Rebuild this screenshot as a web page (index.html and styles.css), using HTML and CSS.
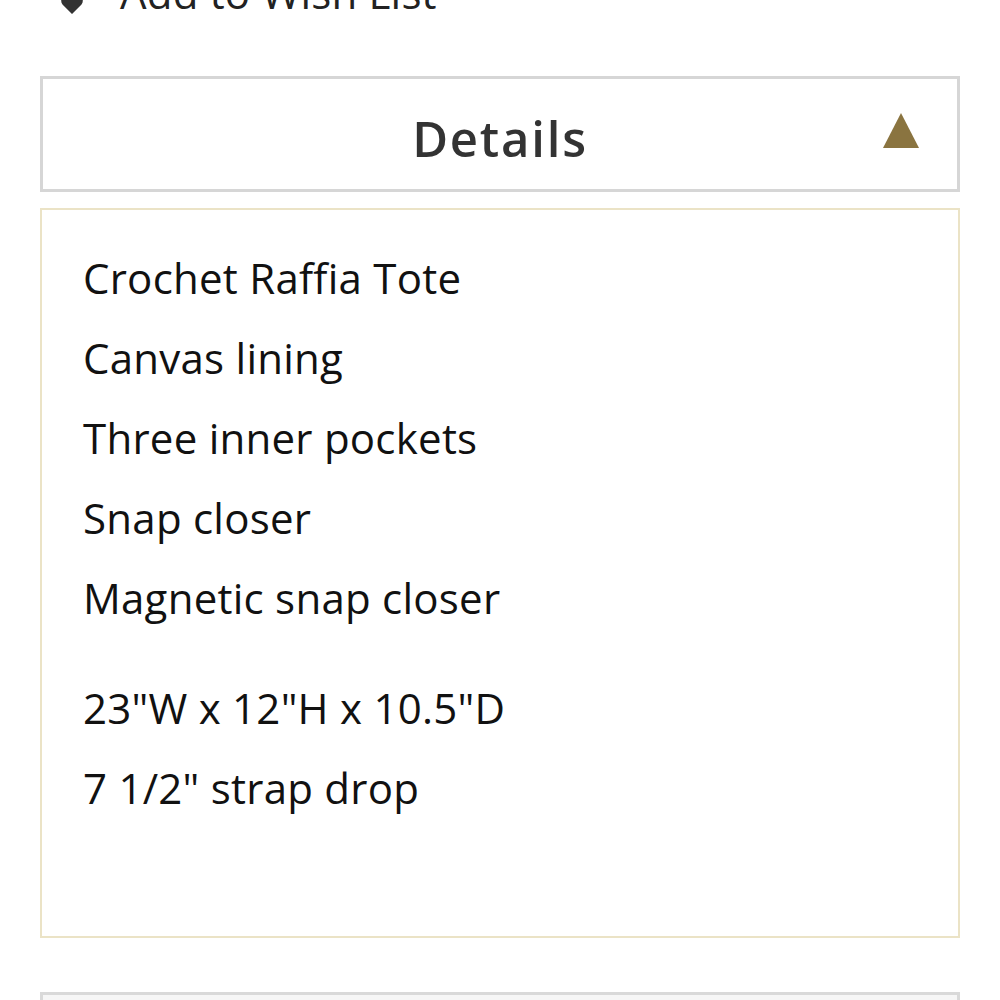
FILE: index.html
```html
<!DOCTYPE html>
<html lang="en">
<head>
<meta charset="utf-8">
<title>Crochet Raffia Tote – Details</title>
<link rel="stylesheet" href="styles.css">
</head>
<body>
<div class="page">
  <a class="wishlist" href="#">
    <svg class="wishlist-icon" viewBox="0 0 24 22" aria-hidden="true">
      <path d="M12 21 L2.5 11.5 A5.5 5.5 0 0 1 12 4 A5.5 5.5 0 0 1 21.5 11.5 Z"/>
    </svg>
    <span>Add to Wish List</span>
  </a>

  <section class="accordion">
    <button class="accordion-head" type="button">
      <span class="accordion-title">Details</span>
      <svg class="accordion-arrow" viewBox="0 0 36 35" aria-hidden="true">
        <polygon points="18,0 36,35 0,35"/>
      </svg>
    </button>
    <div class="accordion-body">
      <p>Crochet Raffia Tote<br>Canvas lining<br>Three inner pockets<br>Snap closer<br>Magnetic snap closer</p>
      <p>23"W x 12"H x 10.5"D<br>7 1/2" strap drop</p>
    </div>
  </section>

  <section class="accordion accordion-next">
    <div class="accordion-head muted"></div>
  </section>
</div>
</body>
</html>
```

FILE: styles.css
```css
html, body {
  margin: 0;
  padding: 0;
  background: #fff;
}

body {
  font-family: "Open Sans", "Liberation Sans", sans-serif;
  color: #111;
  font-variant-ligatures: none;
  overflow: hidden;
}

.page {
  padding: 0 40px;
}

.wishlist {
  display: flex;
  align-items: center;
  gap: 36px;
  margin-top: -47px;
  margin-left: 20px;
  font-size: 42px;
  line-height: 80px;
  letter-spacing: 0.2px;
  color: #222;
  text-decoration: none;
}

.wishlist-icon {
  width: 24px;
  height: 22px;
  fill: #333;
  margin-top: 22px;
}

.accordion {
  margin-top: 43px;
}

.accordion-head {
  box-sizing: border-box;
  width: 100%;
  height: 116px;
  display: flex;
  align-items: center;
  justify-content: center;
  position: relative;
  background: #fff;
  border: 3px solid #d6d6d6;
  padding: 8px 0 0;
  font: inherit;
  cursor: pointer;
}

.accordion-title {
  font-size: 49px;
  font-weight: 600;
  letter-spacing: 1.8px;
  color: #333;
  line-height: 1;
}

.accordion-arrow {
  position: absolute;
  right: 38px;
  top: 34px;
  width: 36px;
  height: 35px;
  fill: #8a7440;
}

.accordion-body {
  box-sizing: border-box;
  margin-top: 16px;
  height: 730px;
  border: 2px solid #ebe3c6;
  padding: 28px 40px 0 41px;
}

.accordion-body p {
  margin: 0 0 30px;
  font-size: 42px;
  line-height: 80px;
  letter-spacing: 0.25px;
  color: #111;
}

.accordion-next {
  margin-top: 54px;
}

.accordion-head.muted {
  background: #f6f6f6;
  border-color: #d9d9d9;
}
```
